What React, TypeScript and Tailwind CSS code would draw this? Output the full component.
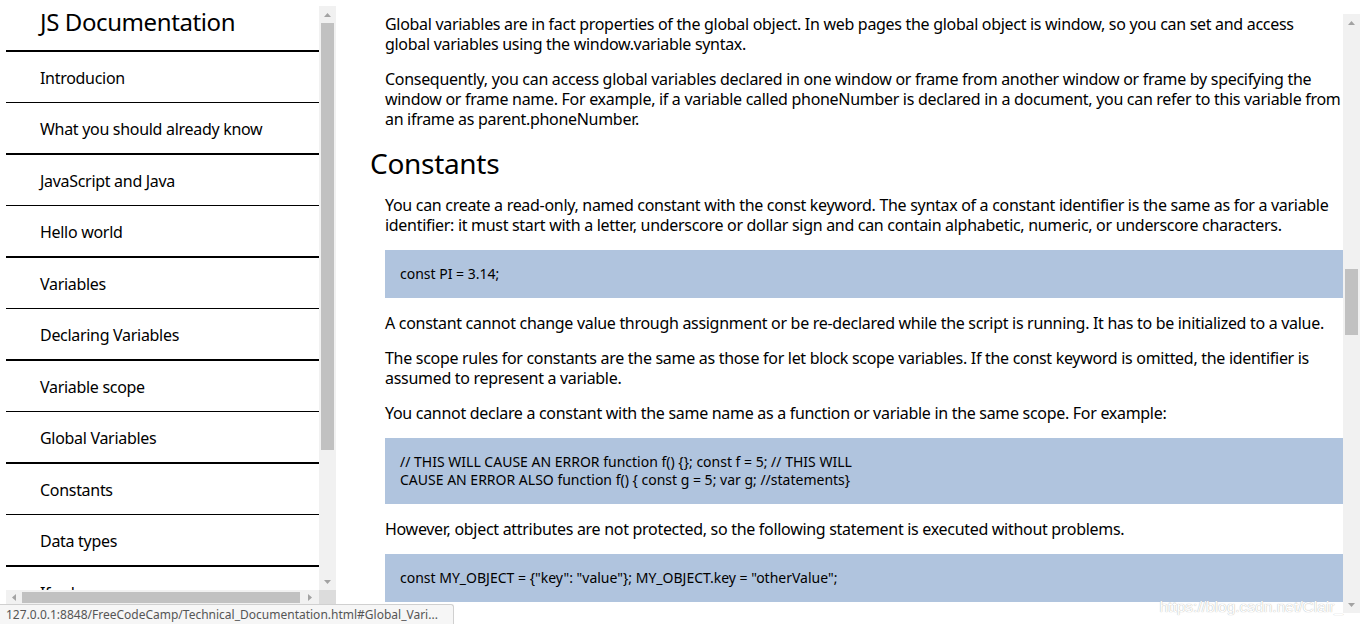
import React from "react";

const navItems = [
  "Introducion",
  "What you should already know",
  "JavaScript and Java",
  "Hello world",
  "Variables",
  "Declaring Variables",
  "Variable scope",
  "Global Variables",
  "Constants",
  "Data types",
  "If...else",
];

const Tri = ({ dir }: { dir: "up" | "down" | "left" | "right" }) => {
  const pts =
    dir === "up"
      ? "0,4 3.5,0 7,4"
      : dir === "down"
      ? "0,0 7,0 3.5,4"
      : dir === "left"
      ? "4,0 4,7 0,3.5"
      : "0,0 0,7 4,3.5";
  const w = dir === "up" || dir === "down" ? 7 : 4;
  const h = dir === "up" || dir === "down" ? 4 : 7;
  return (
    <svg width={w} height={h} viewBox={`0 0 ${w} ${h}`}>
      <polygon points={pts} fill="#a3a3a3" />
    </svg>
  );
};

export default function App() {
  const font = { fontFamily: '"Noto Sans", "Open Sans", sans-serif' };
  return (
    <div
      className="w-[1366px] h-[624px] overflow-hidden bg-white text-black flex relative"
      style={font}
    >
      {/* Sidebar */}
      <div className="ml-[6px] mt-[6px] w-[330px] h-[598px] flex flex-col shrink-0">
        <div className="flex h-[584px]">
          <div className="w-[313px] overflow-hidden">
            <div className="h-[46px] border-b-2 border-black pl-[34px] flex items-start">
              <span className="text-[24px] leading-[32px] tracking-[-0.4px]">JS Documentation</span>
            </div>
            {navItems.map((item, i) => (
              <div
                key={item}
                className={`h-[50px] pl-[34px] flex items-center text-[16px] tracking-[-0.3px] border-black box-content ${
                  i % 2 === 0 ? "border-b" : "border-b-2"
                }`}
              >
                <span className="relative top-[1px]">{item}</span>
              </div>
            ))}
          </div>
          <div className="w-[17px] bg-[#f1f1f1] flex flex-col items-center">
            <div className="h-[17px] flex items-center justify-center">
              <Tri dir="up" />
            </div>
            <div className="w-[13px] h-[427px] bg-[#c1c1c1]" />
            <div className="flex-1" />
            <div className="h-[17px] flex items-center justify-center">
              <Tri dir="down" />
            </div>
          </div>
        </div>
        <div className="flex h-[14px]">
          <div className="w-[313px] bg-[#f1f1f1] flex items-center">
            <div className="w-[16px] flex justify-center">
              <Tri dir="left" />
            </div>
            <div className="w-[278px] h-[11px] bg-[#c1c1c1]" />
            <div className="flex-1 flex justify-center">
              <Tri dir="right" />
            </div>
          </div>
          <div className="w-[17px] bg-[#dcdcdc]" />
        </div>
      </div>

      {/* Main */}
      <div className="flex-1 flex">
        <div className="flex-1 overflow-hidden pt-[14px] pl-[34px] text-[16px] leading-[20px] tracking-[-0.3px] whitespace-nowrap">
          <div className="pl-[15px] flex flex-col gap-[15px]">
            <p>
              Global variables are in fact properties of the global object. In web pages the global
              object is window, so you can set and access
              <br />
              global variables using the window.variable syntax.
            </p>
            <p>
              Consequently, you can access global variables declared in one window or frame from
              another window or frame by specifying the
              <br />
              window or frame name. For example, if a variable called phoneNumber is declared in a
              document, you can refer to this variable from
              <br />
              an iframe as parent.phoneNumber.
            </p>
          </div>
          <h2 className="text-[28px] leading-[36px] mt-[16px] mb-[14px] tracking-[-0.3px]">
            Constants
          </h2>
          <div className="pl-[15px] flex flex-col gap-[15px]">
            <p>
              You can create a read-only, named constant with the const keyword. The syntax of a
              constant identifier is the same as for a variable
              <br />
              identifier: it must start with a letter, underscore or dollar sign and can contain
              alphabetic, numeric, or underscore characters.
            </p>
            <div className="bg-[#b0c4de] px-[15px] py-[15px] text-[14px] leading-[18px] tracking-normal">
              const PI = 3.14;
            </div>
            <p>
              A constant cannot change value through assignment or be re-declared while the script is
              running. It has to be initialized to a value.
            </p>
            <p>
              The scope rules for constants are the same as those for let block scope variables. If the
              const keyword is omitted, the identifier is
              <br />
              assumed to represent a variable.
            </p>
            <p>
              You cannot declare a constant with the same name as a function or variable in the same
              scope. For example:
            </p>
            <div className="bg-[#b0c4de] px-[15px] py-[15px] text-[14px] leading-[18px] tracking-normal">
              // THIS WILL CAUSE AN ERROR function f() {"{}"}; const f = 5; // THIS WILL
              <br />
              CAUSE AN ERROR ALSO function f() {"{"} const g = 5; var g; //statements{"}"}
            </div>
            <p>
              However, object attributes are not protected, so the following statement is executed
              without problems.
            </p>
            <div className="bg-[#b0c4de] px-[15px] py-[15px] text-[14px] leading-[18px] tracking-normal">
              const MY_OBJECT = {"{"}"key": "value"{"}"}; MY_OBJECT.key = "otherValue";
            </div>
          </div>
        </div>
        <div className="w-[17px] mt-[14px] h-[599px] bg-[#f1f1f1] flex flex-col items-center shrink-0">
          <div className="h-[17px] flex items-center justify-center">
            <Tri dir="up" />
          </div>
          <div className="h-[238px]" />
          <div className="w-[13px] h-[66px] bg-[#c1c1c1]" />
          <div className="flex-1" />
          <div className="h-[17px] flex items-center justify-center">
            <Tri dir="down" />
          </div>
        </div>
        <div className="w-[6px] shrink-0" />
      </div>

      {/* Status bar overlay */}
      <div className="absolute left-0 bottom-0 h-[20px] w-[454px] bg-[#f6f6f6] border-t border-r border-[#d0d0d0] rounded-tr-[3px] pl-[6px] flex items-center text-[12px] text-[#555] whitespace-nowrap overflow-hidden">
        127.0.0.1:8848/FreeCodeCamp/Technical_Documentation.html#Global_Vari...
      </div>

      {/* Watermark */}
      <div
        className="absolute right-[23px] bottom-[8px] text-[15.5px] leading-[18px] text-white [text-shadow:0_0_1px_#9a9a9a]"
        style={{ fontFamily: '"Liberation Sans", Arial, sans-serif' }}
      >
        https://blog.csdn.net/Clair_
      </div>
    </div>
  );
}
